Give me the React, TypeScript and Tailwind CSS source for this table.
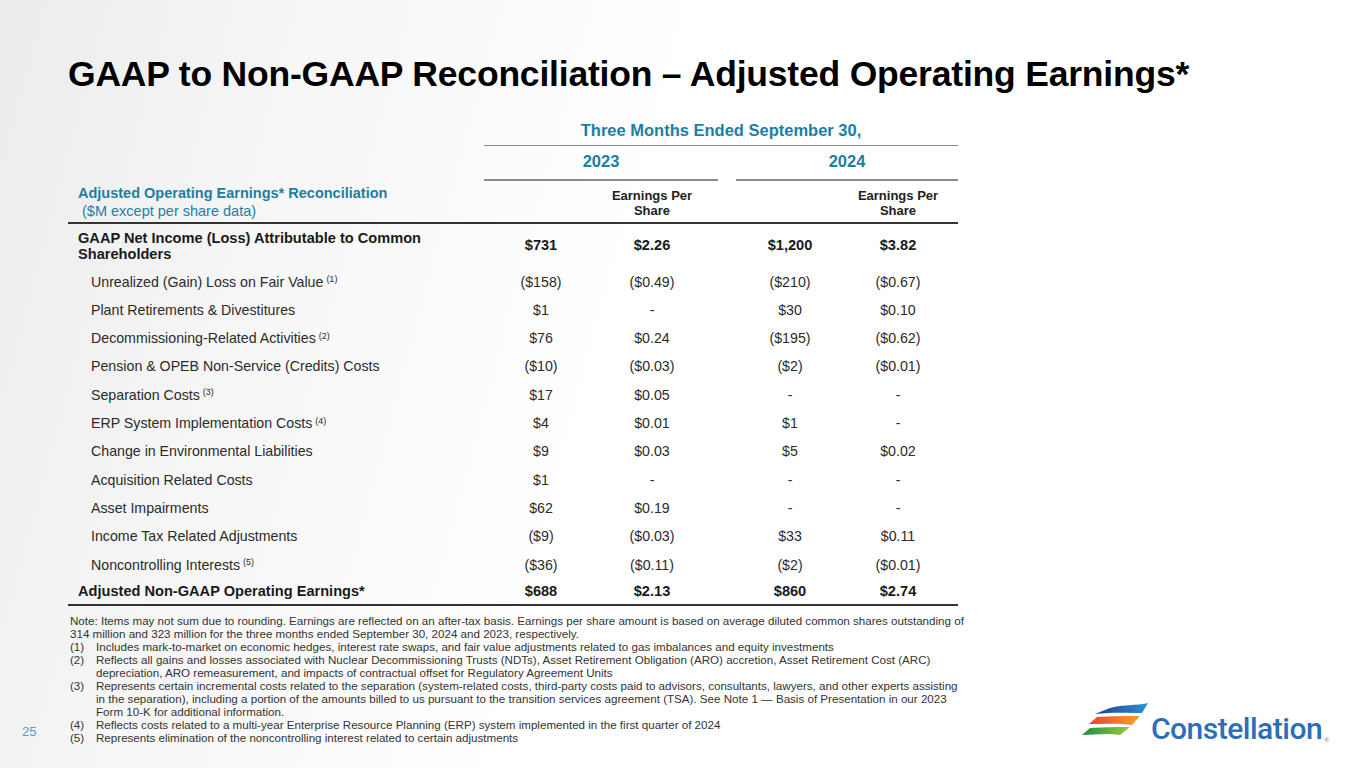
import React from 'react';

type Row = {
  label: string;
  note?: string;
  values: [string, string, string, string];
};

const rows: Row[] = [
  { label: 'Unrealized (Gain) Loss on Fair Value', note: '(1)', values: ['($158)', '($0.49)', '($210)', '($0.67)'] },
  { label: 'Plant Retirements & Divestitures', values: ['$1', '-', '$30', '$0.10'] },
  { label: 'Decommissioning-Related Activities', note: '(2)', values: ['$76', '$0.24', '($195)', '($0.62)'] },
  { label: 'Pension & OPEB Non-Service (Credits) Costs', values: ['($10)', '($0.03)', '($2)', '($0.01)'] },
  { label: 'Separation Costs', note: '(3)', values: ['$17', '$0.05', '-', '-'] },
  { label: 'ERP System Implementation Costs', note: '(4)', values: ['$4', '$0.01', '$1', '-'] },
  { label: 'Change in Environmental Liabilities', values: ['$9', '$0.03', '$5', '$0.02'] },
  { label: 'Acquisition Related Costs', values: ['$1', '-', '-', '-'] },
  { label: 'Asset Impairments', values: ['$62', '$0.19', '-', '-'] },
  { label: 'Income Tax Related Adjustments', values: ['($9)', '($0.03)', '$33', '$0.11'] },
  { label: 'Noncontrolling Interests', note: '(5)', values: ['($36)', '($0.11)', '($2)', '($0.01)'] },
];

const footnotes: [string, string[]][] = [
  ['(1)', ['Includes mark-to-market on economic hedges, interest rate swaps, and fair value adjustments related to gas imbalances and equity investments']],
  [
    '(2)',
    [
      'Reflects all gains and losses associated with Nuclear Decommissioning Trusts (NDTs), Asset Retirement Obligation (ARO) accretion, Asset Retirement Cost (ARC)',
      'depreciation, ARO remeasurement, and impacts of contractual offset for Regulatory Agreement Units',
    ],
  ],
  [
    '(3)',
    [
      'Represents certain incremental costs related to the separation (system-related costs, third-party costs paid to advisors, consultants, lawyers, and other experts assisting',
      'in the separation), including a portion of the amounts billed to us pursuant to the transition services agreement (TSA). See Note 1 — Basis of Presentation in our 2023',
      'Form 10-K for additional information.',
    ],
  ],
  ['(4)', ['Reflects costs related to a multi-year Enterprise Resource Planning (ERP) system implemented in the first quarter of 2024']],
  ['(5)', ['Represents elimination of the noncontrolling interest related to certain adjustments']],
];

const grid = 'grid grid-cols-[418px_110px_112px_140px_100px] items-center';

function Values({ values }: { values: string[] }) {
  return (
    <>
      <div className="text-center">{values[0]}</div>
      <div className="text-center">{values[1]}</div>
      <div className="pl-[24px] text-center">{values[2]}</div>
      <div className="text-center">{values[3]}</div>
    </>
  );
}

function Logo() {
  return (
    <div className="flex items-end">
      <svg width="68" height="38" viewBox="0 0 68 38" className="mb-[6px]">
        <defs>
          <linearGradient id="lb" x1="0" x2="1" y1="0" y2="0">
            <stop offset="0" stopColor="#1d3f8f" />
            <stop offset="1" stopColor="#2f8fd8" />
          </linearGradient>
          <linearGradient id="lo" x1="0" x2="1" y1="0" y2="0">
            <stop offset="0" stopColor="#e8452a" />
            <stop offset="1" stopColor="#f7a12c" />
          </linearGradient>
          <linearGradient id="lg" x1="0" x2="1" y1="0" y2="0">
            <stop offset="0" stopColor="#1f8b45" />
            <stop offset="1" stopColor="#9acb3c" />
          </linearGradient>
        </defs>
        <path d="M30 8 C44 4 56 6 68 3 L62 13 C50 13 33 12 15 14 Z" fill="url(#lb)" />
        <path d="M17 17 C30 16 48 16 60 16 L52 25 C40 23 24 24 9 24 Z" fill="url(#lo)" />
        <path d="M10 28 C24 27 40 27 50 27 L40 35 C28 33 14 35 2 35 Z" fill="url(#lg)" />
      </svg>
      <span className="ml-[3px] font-['Roboto',sans-serif] text-[30px] font-medium leading-none tracking-[-0.5px] text-[#2a6fb9]">
        Constellation
      </span>
      <span className="mb-[1px] ml-[2px] text-[6px] leading-none text-[#2a6fb9]">®</span>
    </div>
  );
}

export default function App() {
  return (
    <div className="relative h-[768px] w-[1365px] overflow-hidden bg-[linear-gradient(105deg,#ececec_0%,#f7f7f7_22%,#ffffff_45%)] font-['Liberation_Sans',Arial,sans-serif] text-[#2b2b2b]">
      <h1 className="ml-[68px] pt-[57px] text-[35.5px] font-bold leading-none tracking-[-0.2px] text-black">
        GAAP to Non-GAAP Reconciliation – Adjusted Operating Earnings*
      </h1>

      <div className="ml-[68px] mt-[27px] w-[890px]">
        <div className="ml-[416px] w-[474px] text-[16.5px] font-bold text-[#1b7ea5]">
          <div className="h-[20px] text-center leading-[20px]">Three Months Ended September 30,</div>
          <div className="mt-[5px] h-[1.5px] bg-[#8a8a8a]" />
          <div className="mt-[5px] flex gap-[18px]">
            <div className="w-[234px]">
              <div className="h-[20px] text-center leading-[20px]">2023</div>
              <div className="mt-[8px] h-[1.5px] bg-[#8a8a8a]" />
            </div>
            <div className="w-[222px]">
              <div className="h-[20px] text-center leading-[20px]">2024</div>
              <div className="mt-[8px] h-[1.5px] bg-[#8a8a8a]" />
            </div>
          </div>
        </div>

        <div className={`${grid} h-[43px] items-start border-b-2 border-[#333] pt-[3px]`}>
          <div className="pl-[10px] text-[14.5px] leading-[18px] text-[#1b7ea5]">
            <div className="font-bold">Adjusted Operating Earnings* Reconciliation</div>
            <div className="pl-[4px]">($M except per share data)</div>
          </div>
          <div />
          <div className="pt-[4px] text-center text-[13px] font-bold leading-[15px] text-[#222]">
            Earnings Per
            <br />
            Share
          </div>
          <div />
          <div className="pt-[4px] text-center text-[13px] font-bold leading-[15px] text-[#222]">
            Earnings Per
            <br />
            Share
          </div>
        </div>

        <div className={`${grid} h-[44px] text-[14.6px] font-bold text-[#1a1a1a]`}>
          <div className="pl-[10px] leading-[16px]">
            GAAP Net Income (Loss) Attributable to Common
            <br />
            Shareholders
          </div>
          <Values values={['$731', '$2.26', '$1,200', '$3.82']} />
        </div>

        {rows.map((r) => (
          <div key={r.label} className={`${grid} h-[28.3px] text-[14.2px] leading-none`}>
            <div className="pl-[23px]">
              {r.label}
              {r.note && <sup className="ml-[3px] text-[9px]">{r.note}</sup>}
            </div>
            <Values values={r.values} />
          </div>
        ))}

        <div className={`${grid} h-[27px] border-b-2 border-[#333] text-[14.6px] font-bold leading-none text-[#1a1a1a]`}>
          <div className="pl-[10px]">Adjusted Non-GAAP Operating Earnings*</div>
          <Values values={['$688', '$2.13', '$860', '$2.74']} />
        </div>
      </div>

      <div className="ml-[70px] mt-[8px] text-[11.6px] leading-[13px] text-[#333]">
        <div className="whitespace-nowrap">
          Note: Items may not sum due to rounding. Earnings are reflected on an after-tax basis. Earnings per share amount is based on average diluted common shares outstanding of
        </div>
        <div className="whitespace-nowrap">
          314 million and 323 million for the three months ended September 30, 2024 and 2023, respectively.
        </div>
        {footnotes.map(([n, lines]) => (
          <div key={n} className="flex">
            <div className="w-[26px] shrink-0">{n}</div>
            <div>
              {lines.map((l) => (
                <div key={l} className="whitespace-nowrap">
                  {l}
                </div>
              ))}
            </div>
          </div>
        ))}
      </div>

      <div className="absolute left-[22px] top-[722px] text-[13px] text-[#4a9fcb]">25</div>
      <div className="absolute left-[1080px] top-[700px]">
        <Logo />
      </div>
    </div>
  );
}
